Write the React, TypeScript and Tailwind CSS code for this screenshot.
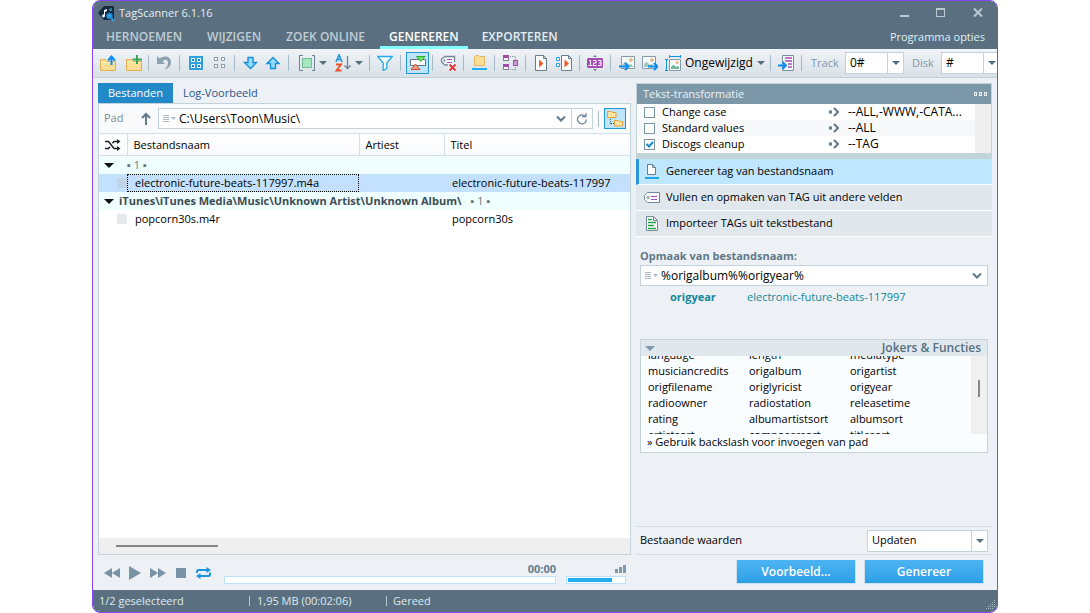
import type { ReactNode } from 'react';

const menuItems = ['HERNOEMEN', 'WIJZIGEN', 'ZOEK ONLINE', 'GENEREREN', 'EXPORTEREN'];

const transforms = [
  { name: 'Change case', scope: '--ALL,-WWW,-CATA...', checked: false },
  { name: 'Standard values', scope: '--ALL', checked: false },
  { name: 'Discogs cleanup', scope: '--TAG', checked: true },
];

const jokers = [
  'language', 'length', 'mediatype',
  'musiciancredits', 'origalbum', 'origartist',
  'origfilename', 'origlyricist', 'origyear',
  'radioowner', 'radiostation', 'releasetime',
  'rating', 'albumartistsort', 'albumsort',
  'artistsort', 'composersort', 'titlesort',
];

function Icon({ children, crisp = true }: { children: ReactNode; crisp?: boolean }) {
  return (
    <svg width="16" height="16" viewBox="0 0 16 16" fill="none" className="shrink-0" shapeRendering={crisp ? 'crispEdges' : 'auto'} aria-hidden="true">
      {children}
    </svg>
  );
}

function Caret({ className = 'text-[#566f7f]' }: { className?: string }) {
  return (
    <svg width="8" height="4" viewBox="0 0 8 4" className={`shrink-0 ${className}`} aria-hidden="true">
      <path d="M0 0h8L4 4z" fill="currentColor" />
    </svg>
  );
}

function Chevron() {
  return (
    <svg width="10" height="8" viewBox="0 0 10 8" fill="none" className="shrink-0" aria-hidden="true">
      <path d="M1 1.500l4 4 4-4" stroke="#5f7787" strokeWidth="2" />
    </svg>
  );
}

function ListCaret() {
  return (
    <svg width="13" height="8" viewBox="0 0 13 8" fill="none" className="shrink-0" aria-hidden="true">
      <path d="M0 .5h6M0 2.500h6M0 4.500h6M0 6.500h6" stroke="#a9bac6" shapeRendering="crispEdges" />
      <path d="M8 2h5l-2.500 3z" fill="#a9bac6" />
    </svg>
  );
}

function ToolButton({ label, children }: { label: string; children: ReactNode }) {
  return (
    <button type="button" aria-label={label} className="flex shrink-0 items-center">
      {children}
    </button>
  );
}

function Separator() {
  return <span className="h-4 w-px shrink-0 bg-[#a6b9c7]" />;
}

function Picture() {
  return (
    <>
      <path d="M2.500 1.500h13v12h-13z" fill="#f5f9fb" stroke="#8799a6" />
      <path d="M11 3h2v1h1v2h-1v1h-2V6h-1V4h1z" fill="#e3c08c" />
      <path d="M4 12V9l2-2h1l3 3 1-1h1l2 2v1z" fill="#a2c9b8" />
    </>
  );
}

function SmallFolder() {
  return (
    <>
      <path d="M.5 4.500h5l1.500 2h8.500v9H.5z" fill="#fbdf96" stroke="#e5ae4e" />
      <path d="M1 7.500h14" stroke="#fff0c6" />
    </>
  );
}

function Toolbar() {
  return (
    <div className="flex h-[29px] shrink-0 items-center overflow-hidden border-b border-[#c2d1d7] bg-linear-to-b from-[#f0f3f7] to-[#d8e1e7]">
      <div className="flex items-center gap-[10px] pl-[7px] pr-[6px]">
        <ToolButton label="Map openen">
          <Icon crisp={false}>
            <SmallFolder />
            <path d="M11.500 10V2M8 5.500l3.500-4 3.500 4" stroke="#0b8cf0" strokeWidth="2" />
          </Icon>
        </ToolButton>
        <ToolButton label="Map toevoegen">
          <Icon crisp={false}>
            <SmallFolder />
            <path d="M11 0v9M6.500 4.500H16" stroke="#36a853" strokeWidth="2" />
          </Icon>
        </ToolButton>
      </div>
      <Separator />
      <div className="px-[7px]">
        <ToolButton label="Ongedaan maken">
          <Icon crisp={false}>
            <path d="M1 1v8h8L6.500 6.500C9 3.500 12.500 4.500 12 8.500c-.3 2.400-1.500 4-3.500 6C13 13 15 10.500 15 7.500 15 1 8 0 3.500 3.500z" fill="#8ba1b0" />
          </Icon>
        </ToolButton>
      </div>
      <Separator />
      <div className="flex gap-2 px-[7px]">
        <ToolButton label="Alles selecteren">
          <Icon>
            <path d="M2 1h14v14H2z" fill="#2d9fdc" />
            <path d="M4.500 3.500h3v3h-3zM10.500 3.500h3v3h-3zM4.500 9.500h3v3h-3zM10.500 9.500h3v3h-3z" fill="#1c86c0" stroke="#e6f6ff" />
          </Icon>
        </ToolButton>
        <ToolButton label="Selectie opheffen">
          <Icon>
            <path d="M3.500 2.500h3v3h-3zM10.500 2.500h3v3h-3zM3.500 9.500h3v3h-3zM10.500 9.500h3v3h-3z" fill="#fff" stroke="#8c9fad" />
          </Icon>
        </ToolButton>
      </div>
      <Separator />
      <div className="flex gap-[7px] px-[7px]">
        <ToolButton label="Omlaag">
          <Icon crisp={false}>
            <path d="M6 2.500h5v5h3.500L8.500 13.500 2.500 7.500H6z" fill="#8fdcff" stroke="#1b8fd6" strokeWidth="1.400" />
          </Icon>
        </ToolButton>
        <ToolButton label="Omhoog">
          <Icon crisp={false}>
            <path d="M5.500 13.500h5v-5H14L8 2.500 2 8.500h3.500z" fill="#8fdcff" stroke="#1b8fd6" strokeWidth="1.400" />
          </Icon>
        </ToolButton>
      </div>
      <Separator />
      <div className="flex items-center gap-1 pl-[10px] pr-[6px]">
        <ToolButton label="Weergave">
          <Icon>
            <path d="M3.500.5h-3v15h3M12.500.5h3v15h-3" stroke="#6e8493" />
            <path d="M3.500 3.500h9v9h-9z" fill="#a5eabf" stroke="#74ba95" />
          </Icon>
        </ToolButton>
        <Caret />
        <ToolButton label="Sorteren">
          <svg width="20" height="18" viewBox="4 0 20 18" fill="none" className="shrink-0" aria-hidden="true">
            <path d="M9 8l3-7 3 7M10 5.500h4" stroke="#2299dc" strokeWidth="1.700" />
            <path d="M9 10.500h5l-4.500 6h5" stroke="#ee522d" strokeWidth="1.900" />
            <path d="M20.500 2v12M17.500 11.500l3 3 3-3" stroke="#6e8493" strokeWidth="1.300" />
          </svg>
        </ToolButton>
        <Caret />
      </div>
      <Separator />
      <div className="px-[7px]">
        <ToolButton label="Filter">
          <Icon crisp={false}>
            <path d="M.7 1.500h14.600L9.800 8v5.500l-3.600 2V8z" fill="#f4fcff" stroke="#27a9e8" strokeWidth="1.300" />
          </Icon>
        </ToolButton>
      </div>
      <Separator />
      <div className="pl-[5px] pr-[3px]">
        <button type="button" aria-label="Tag-paneel" aria-pressed="true" className="flex h-[22px] w-[23px] items-center justify-center border border-[#2495d8] bg-[#bce5fd]">
          <Icon crisp={false}>
            <path d="M.5 4.500h15v6H.5z" fill="#fff" stroke="#5e7687" />
            <path d="M6.500 1.500h8.500l-4.200 5z" fill="#6be85d" stroke="#32a83a" />
            <path d="M1 14.500h9L5.500 9z" fill="#f7a07f" stroke="#d04d3c" />
          </Icon>
        </button>
      </div>
      <Separator />
      <div className="px-[7px]">
        <ToolButton label="Tag verwijderen">
          <Icon crisp={false}>
            <path d="M14.500 7V1.500H5L1.500 4v3L5 10h3" fill="#f7fafc" stroke="#71889a" strokeWidth="1.300" />
            <path d="M3.500 5.500h2" stroke="#71889a" strokeWidth="2" />
            <path d="M7 4.500h5M7 7.500h5" stroke="#a84bb5" />
            <path d="M9 9l6.500 6.500M15.500 9L9 15.500" stroke="#fff" strokeWidth="4" />
            <path d="M9.500 9.500l6 6m0-6l-6 6" stroke="#e63333" strokeWidth="2" />
          </Icon>
        </ToolButton>
      </div>
      <Separator />
      <div className="px-[7px]">
        <ToolButton label="Bestandsmap">
          <Icon crisp={false}>
            <path d="M3.500 1.500l1-1h3l1 1h5v9h-10z" fill="#fbdf96" stroke="#e5b664" />
            <path d="M1 14h15" stroke="#24aef0" strokeWidth="2" />
          </Icon>
        </ToolButton>
      </div>
      <Separator />
      <div className="px-[7px]">
        <ToolButton label="Structuur">
          <Icon>
            <path d="M1.500.5h5v5h-5zM1.500 9.500h5v5h-5z" fill="#fff" stroke="#8a7a9c" />
            <path d="M1 0h6v3H1zM1 9h6v3H1z" fill="#a24bad" />
            <path d="M11.500 5.500h4v5h-4z" fill="#c99bd1" stroke="#a24bad" />
            <path d="M8 1.500h6M8 14.500h6M13.500 2v3M13.500 12v3" stroke="#8296a3" strokeDasharray="1 1" />
          </Icon>
        </ToolButton>
      </div>
      <Separator />
      <div className="flex gap-[7px] px-[7px]">
        <ToolButton label="Afspelen">
          <Icon crisp={false}>
            <path d="M2.500.5h8l3 3v12h-11z" fill="#fff" stroke="#687e8d" />
            <path d="M10.500.5v3h3" stroke="#687e8d" />
            <path d="M6 4.500l4.500 4L6 12.500z" fill="#f05a24" />
          </Icon>
        </ToolButton>
        <ToolButton label="Lijst afspelen">
          <Icon crisp={false}>
            <path d="M5.500.5h7l3 3v12h-10z" fill="#fff" stroke="#687e8d" />
            <path d="M12.500.5v3h3" stroke="#687e8d" />
            <path d="M8.500 4.500l4.500 4-4.500 4z" fill="#f05a24" />
            <path d="M.5 2.500h3v3h-3zM.5 8.500h3v3h-3z" fill="#fff" stroke="#24a7e8" />
          </Icon>
        </ToolButton>
      </div>
      <Separator />
      <div className="px-[7px]">
        <ToolButton label="Nummeren">
          <Icon crisp={false}>
            <path d="M1 3h14l1 1v8l-1 1H1l-1-1V4z" fill="#a64bb5" />
            <path d="M6 2l2-2 2 2zM6 14l2 2 2-2z" fill="#687e8d" />
            <path d="M2 5.500h1.500v5M1.500 10.500h4M6 5.500h3v2.500H6.500v2.500H9.500M11 5.500h3v5h-3m1-2.500h2" stroke="#fff" />
          </Icon>
        </ToolButton>
      </div>
      <Separator />
      <div className="flex items-center gap-[7px] pl-2 pr-[5px]">
        <ToolButton label="Hoes importeren">
          <Icon crisp={false}>
            <Picture />
            <path d="M0 11.500h9M6 8l3.500 3.500L6 15" stroke="#0b8cf0" strokeWidth="2" />
          </Icon>
        </ToolButton>
        <ToolButton label="Hoes exporteren">
          <Icon crisp={false}>
            <g transform="translate(-2)">
              <Picture />
            </g>
            <path d="M6 11.500h9M12 8l3.500 3.500L12 15" stroke="#0b8cf0" strokeWidth="2" />
          </Icon>
        </ToolButton>
        <button type="button" className="flex items-center gap-1 text-[12px] text-black">
          <Icon crisp={false}>
            <path d="M4.500 4.500h11v11h-11z" fill="#f5f9fb" stroke="#8799a6" />
            <path d="M11 6h2v1h1v1h-1v1h-2z" fill="#e3c08c" />
            <path d="M6 14v-2l2-2h1l2 2 2-1 1 1v2z" fill="#6fb592" />
            <path d="M5 1.500h10M4.500 0v3M15.500 0v3M1.500 5v10M0 4.500h3M0 15.500h3" stroke="#1493e6" />
          </Icon>
          <span className="w-[68px] text-left">Ongewijzigd</span>
          <Caret />
        </button>
      </div>
      <Separator />
      <div className="px-[7px]">
        <ToolButton label="Rapport">
          <Icon crisp={false}>
            <path d="M4.500.5h11v15h-11z" fill="#f9fbfc" stroke="#798e9c" />
            <path d="M7 3h7M7 6h7M10 9h4M10 12h4" stroke="#a64bb5" strokeWidth="1.300" />
            <path d="M0 10.500h7M4.500 7l3.500 3.500L4.500 14" stroke="#0b8cf0" strokeWidth="2" />
          </Icon>
        </ToolButton>
      </div>
      <Separator />
      <label htmlFor="track" className="w-[43px] shrink-0 pl-[9px] text-[11px] text-[#7f97a7]">Track</label>
      <NumberCombo id="track" value="0#" />
      <label htmlFor="disk" className="w-[37px] shrink-0 pl-2 text-[11px] text-[#7f97a7]">Disk</label>
      <NumberCombo id="disk" value="#" />
    </div>
  );
}

function NumberCombo({ id, value }: { id: string; value: string }) {
  return (
    <div className="flex h-[22px] w-[59px] shrink-0 border border-[#c2d3dc] bg-white">
      <input id={id} defaultValue={value} className="w-[41px] px-1 text-[12px] text-black outline-none" />
      <button type="button" aria-label={`Lijst ${id}`} className="flex flex-1 items-center justify-center border-l border-[#c2d3dc]">
        <Caret />
      </button>
    </div>
  );
}

function TitleBar() {
  return (
    <header className="flex h-[48px] shrink-0 flex-col bg-[#5a7080] text-[#e4edf2]">
      <div className="flex h-6 items-center pl-[5px] pr-[14px]">
        <svg width="17" height="17" viewBox="0 0 17 17" className="mr-1" aria-hidden="true">
          <path d="M0 8L6 1h9l1 1v13H6z" fill="#16293d" />
          <path d="M6 11V5l3-1v2L7 7v4a1.500 1.500 0 1 1-1-1.500" fill="#eaf5fc" />
          <circle cx="11.500" cy="11" r="3" fill="#2b9be0" stroke="#196fb0" />
          <path d="M13.500 13.500l2.500 2.500" stroke="#36a6eb" strokeWidth="2" />
          <path d="M11 4l2 2M13 3v3" stroke="#50b5f0" />
        </svg>
        <h1 className="text-[11px]">TagScanner 6.1.16</h1>
        <div className="ml-auto flex items-center gap-[27px]">
          <button type="button" aria-label="Minimaliseren">
            <svg width="10" height="10" viewBox="0 0 10 10" shapeRendering="crispEdges"><path d="M1 7h9v2H1z" fill="#b9cad5" /></svg>
          </button>
          <button type="button" aria-label="Maximaliseren">
            <svg width="10" height="10" viewBox="0 0 10 10" fill="none" shapeRendering="crispEdges"><path d="M.5.5h8v8h-8z" stroke="#b9cad5" /><path d="M0 1.500h9" stroke="#b9cad5" /></svg>
          </button>
          <button type="button" aria-label="Sluiten">
            <svg width="10" height="10" viewBox="0 0 10 10" fill="none"><path d="M1 .5l8 8M9 .5l-8 8" stroke="#b9cad5" strokeWidth="2" /></svg>
          </button>
        </div>
      </div>
      <nav className="flex flex-1 items-stretch pl-[3px] pr-[12px] text-[12px] font-semibold text-[#c1cdd4]">
        {menuItems.map((item) => (
          <a
            key={item}
            href="#"
            className={
              item === 'GENEREREN'
                ? 'flex items-center border-b-3 border-[#84ffff] px-[9px] pt-[3px] text-white'
                : item === 'EXPORTEREN'
                  ? 'flex items-center px-[14px] text-[#e4eef3]'
                  : 'mr-[5px] flex items-center px-[10px]'
            }
          >
            {item}
          </a>
        ))}
        <a href="#" className="ml-auto flex items-center text-[11px] font-normal text-[#dff1f5]">Programma opties</a>
      </nav>
    </header>
  );
}

function FileTable() {
  return (
    <table className="w-full table-fixed text-left text-[11px] leading-[18px] text-black">
      <colgroup>
        <col className="w-[28px]" />
        <col className="w-[232px]" />
        <col className="w-[85px]" />
        <col />
      </colgroup>
      <thead>
        <tr className="h-[22px] border-y border-[#d3e0e7] bg-linear-to-b from-white to-[#f9fafb]">
          <th aria-label="Volgorde" className="border-r border-[#d3e0e7] pl-[6px]">
            <svg width="17" height="12" viewBox="0 0 17 12" fill="none" aria-hidden="true">
              <path d="M0 2.500h3.500L9 9.500h5M0 9.500h3.500L5 7.700M7.500 4.300L9 2.500h5" stroke="#1d2327" strokeWidth="1.500" />
              <path d="M12 0l3.500 2.500L12 5zM12 7l3.500 2.500L12 12z" fill="#1d2327" />
            </svg>
          </th>
          <th className="border-r border-[#d3e0e7] pl-[6px] font-normal">Bestandsnaam</th>
          <th className="border-r border-[#d3e0e7] pl-[6px] font-normal">Artiest</th>
          <th className="pl-[6px] font-normal">Titel</th>
        </tr>
      </thead>
      <tbody>
        <tr className="h-[18px] bg-[#efffff]">
          <td className="pl-[5px]"><GroupArrow /></td>
          <td colSpan={3} className="text-[#657681]">▪ 1 ▪</td>
        </tr>
        <tr className="h-[18px] bg-[#c3e0fe]">
          <td className="pl-[18px]"><span className="block size-[10px] bg-[#bfd5e7]" /></td>
          <td className="pl-2 outline-1 -outline-offset-1 outline-dotted outline-black">electronic-future-beats-117997.m4a</td>
          <td />
          <td className="pl-2">electronic-future-beats-117997</td>
        </tr>
        <tr className="h-[18px] bg-[#efffff]">
          <td colSpan={4} className="pl-[5px]">
            <div className="flex items-center gap-[5px] whitespace-nowrap">
              <GroupArrow />
              <span className="font-bold text-[#3c4b54]">iTunes\iTunes Media\Music\Unknown Artist\Unknown Album\</span>
              <span className="pl-1 text-[#657681]">▪ 1 ▪</span>
            </div>
          </td>
        </tr>
        <tr className="h-[18px]">
          <td className="pl-[18px]"><span className="block size-[10px] bg-[#e5e9ec]" /></td>
          <td className="pl-2">popcorn30s.m4r</td>
          <td />
          <td className="pl-2">popcorn30s</td>
        </tr>
      </tbody>
    </table>
  );
}

function GroupArrow() {
  return (
    <svg width="10" height="5" viewBox="0 0 10 5" className="shrink-0" aria-hidden="true"><path d="M0 0h10L5 5z" fill="#0d1115" /></svg>
  );
}

function FilesPane() {
  return (
    <section className="flex min-w-0 flex-1 flex-col">
      <div role="tablist" className="flex h-5 shrink-0 text-[11px]">
        <button type="button" role="tab" aria-selected="true" className="w-[75px] bg-[#2289c8] text-white">Bestanden</button>
        <button type="button" role="tab" aria-selected="false" className="px-[10px] text-[#2a5488]">Log-Voorbeeld</button>
      </div>
      <div className="flex min-h-0 flex-1 flex-col border border-[#c2d3da] bg-white">
        <div className="flex h-[29px] shrink-0 items-center bg-[#f8fafc] pl-[5px] pr-1">
          <label htmlFor="path" className="w-[37px] text-[11px] text-[#7c8c98]">Pad</label>
          <button type="button" aria-label="Map omhoog" className="mr-[7px]">
            <svg width="10" height="14" viewBox="0 0 10 14" fill="none"><path d="M5 13V2M1 6l4-4 4 4" stroke="#5f7787" strokeWidth="2" /></svg>
          </button>
          <div className="flex h-[21px] min-w-0 flex-1 items-center border border-[#c2d3dc] bg-white pl-1">
            <ListCaret />
            <input id="path" defaultValue="C:\Users\Toon\Music\" className="min-w-0 flex-1 pl-[3px] text-[12px] text-black outline-none" />
            <button type="button" aria-label="Recente mappen" className="px-[5px]"><Chevron /></button>
            <button type="button" aria-label="Vernieuwen" className="flex h-full w-[21px] items-center justify-center border-l border-[#c2d3dc]">
              <svg width="12" height="12" viewBox="0 0 12 12" fill="none"><path d="M9.500 3.500A4.500 4.500 0 1 0 10.500 6.500" stroke="#71889a" strokeWidth="1.300" /><path d="M6 3.500h4V0" stroke="#71889a" strokeWidth="1.300" /></svg>
            </button>
          </div>
          <span className="mx-[5px] h-4 w-px bg-[#a6b9c7]" />
          <button type="button" aria-label="Mappenstructuur" aria-pressed="true" className="flex h-[21px] w-[22px] items-center justify-center border border-[#2495d8] bg-[#bce5fd]">
            <svg width="18" height="17" viewBox="0 0 18 17" fill="none">
              <path d="M1.500 1.500h4l1 1h3.500v5h-8.500zM8.500 10.500h4l1 1h3v4.500h-8z" fill="#fbe3a3" stroke="#e3a43e" />
              <path d="M4.500 9v5M5 13.500h3" stroke="#3b5262" strokeDasharray="1 1" shapeRendering="crispEdges" />
            </svg>
          </button>
        </div>
        <FileTable />
        <div className="mt-auto flex h-4 items-center bg-[#efefef] pl-[17px]">
          <span className="h-[2px] w-[102px] bg-[#868686]" />
        </div>
      </div>
      <div className="flex h-[35px] shrink-0 items-end pb-[6px] pl-[6px] pr-[5px]">
        <div className="mb-1 flex items-center gap-2">
          <button type="button" aria-label="Vorige"><svg width="16" height="14" viewBox="0 0 16 14"><path d="M8 2v10L0 7zM16 2v10L8 7z" fill="#7893a5" /></svg></button>
          <button type="button" aria-label="Afspelen"><svg width="14" height="14" viewBox="0 0 14 14"><path d="M1 0v14l12-7z" fill="#7893a5" /></svg></button>
          <button type="button" aria-label="Volgende"><svg width="16" height="14" viewBox="0 0 16 14"><path d="M0 2v10l8-5zM8 2v10l8-5z" fill="#7893a5" /></svg></button>
          <button type="button" aria-label="Stop" className="ml-[2px]"><svg width="10" height="14" viewBox="0 0 10 14"><path d="M0 2h10v10H0z" fill="#7893a5" /></svg></button>
          <button type="button" aria-label="Herhalen" className="ml-px">
            <svg width="18" height="14" viewBox="0 0 18 14" fill="none"><path d="M2 7V5.500Q2 4 3.500 4H13M15 6.500V8.500Q15 10 13.500 10H5" stroke="#1f95d8" strokeWidth="2" /><path d="M11.500 1l4.500 3-4.500 3zM5.500 7L1 10l4.500 3z" fill="#1f95d8" /></svg>
          </button>
        </div>
        <div className="ml-[11px] flex flex-1 flex-col items-end">
          <span className="text-[11px] leading-[15px] font-bold text-[#657d8c]">00:00</span>
          <div className="h-2 w-full border border-[#bce3fb] bg-white" />
        </div>
        <div className="ml-[10px] flex w-[60px] flex-col items-end gap-[3px]">
          <svg width="12" height="9" viewBox="0 0 12 9" aria-hidden="true"><path d="M1 5h3v4H1zM5 3h3v6H5zM9 1h3v8H9z" fill="#8098a8" /></svg>
          <div className="h-2 w-full border border-[#bce3fb] bg-white p-px">
            <div className="h-full w-[44px] bg-[#22aeee]" />
          </div>
        </div>
      </div>
    </section>
  );
}

function TransformRow({ name, scope, checked }: { name: string; scope: string; checked: boolean }) {
  return (
    <label className="flex h-4 items-center pl-[7px] text-[11px] odd:bg-white even:bg-[#f7f8fa]">
      <input type="checkbox" defaultChecked={checked} className="peer size-[11px] appearance-none border border-[#7c95a5] bg-white" />
      <svg width="11" height="11" viewBox="0 0 11 11" fill="none" className="-ml-[11px] hidden peer-checked:block" aria-hidden="true">
        <path d="M2.500 5l2.500 2.500L9 3" stroke="#1c86c6" strokeWidth="2" />
      </svg>
      <span className="w-[174px] pl-[7px]">{name}</span>
      <svg width="11" height="10" viewBox="0 0 11 10" fill="none" className="mr-[8px]" aria-hidden="true">
        <path d="M0 3.500h3v3H0z" fill="#5f7787" />
        <path d="M5 1l4 4-4 4" stroke="#5f7787" strokeWidth="2" />
      </svg>
      <span className="text-[12px] leading-4">{scope}</span>
    </label>
  );
}

function GeneratePane() {
  return (
    <aside className="flex w-[356px] shrink-0 flex-col text-[11px] text-black">
      <div className="border border-b-[6px] border-[#c2d3da]">
        <div className="flex h-5 items-center justify-between bg-[#7c97a8] pl-[6px] pr-1 text-[#edf3f6]">
          <h2>Tekst-transformatie</h2>
          <button type="button" aria-label="Meer">
            <svg width="13" height="4" viewBox="0 0 13 4" fill="none" shapeRendering="crispEdges"><path d="M.5.5h2v3h-2zM5.500.5h2v3h-2zM10.500.5h2v3h-2z" stroke="#eef4f7" /></svg>
          </button>
        </div>
        <div className="flex h-[49px] bg-white">
          <div className="flex-1">
            {transforms.map((t) => <TransformRow key={t.name} {...t} />)}
          </div>
          <div className="w-4 bg-[#efefef]" />
        </div>
      </div>

      <nav>
        <a href="#" className="flex h-[26px] items-center gap-[6px] border-b border-l-3 border-b-white border-l-[#2798dc] bg-[#bee6fe] pl-[5px]">
          <Icon crisp={false}>
            <path d="M3.500.5h5l3 3v7h-8z" fill="#fff" stroke="#687e8d" />
            <path d="M8.500.5v3h3" stroke="#687e8d" />
            <path d="M1 14h14" stroke="#1ba6ea" strokeWidth="2" />
          </Icon>
          Genereer tag van bestandsnaam
        </a>
        <a href="#" className="flex h-[26px] items-center gap-[6px] border-b border-white bg-[#e0e8ee] pl-2">
          <Icon crisp={false}>
            <path d="M3.500 2.500h12v10h-12L.5 9.500v-4z" fill="#fafcfd" stroke="#71889a" />
            <circle cx="4" cy="7.500" r="1.200" stroke="#71889a" />
            <path d="M7 6.500h6M7 9.500h6" stroke="#a64bb5" />
          </Icon>
          Vullen en opmaken van TAG uit andere velden
        </a>
        <a href="#" className="flex h-[26px] items-center gap-[6px] border-b border-white bg-[#e0e8ee] pl-2">
          <Icon crisp={false}>
            <path d="M2.500.5h7l4 4v10h-11z" fill="#fff" stroke="#71889a" />
            <path d="M9.500.5v4h4" stroke="#71889a" />
            <path d="M4 3.500h4M4 6.500h8M4 9.500h6M4 12.500h8" stroke="#20a347" strokeWidth="1.300" />
          </Icon>
          Importeer TAGs uit tekstbestand
        </a>
      </nav>

      <div className="px-1 pt-[10px]">
        <label htmlFor="format" className="block leading-[18px] font-bold text-[#5f7787]">Opmaak van bestandsnaam:</label>
        <div className="flex h-[21px] items-center border border-[#c2d3dc] bg-white pl-1 pr-[5px]">
          <ListCaret />
          <input id="format" defaultValue="%origalbum%%origyear%" className="min-w-0 flex-1 pl-[3px] text-[12px] outline-none" />
          <button type="button" aria-label="Recente opmaak"><Chevron /></button>
        </div>
        <dl className="flex h-[53px] pt-1 pl-[30px] leading-[14px] text-[#12869a]">
          <dt className="w-[77px] font-bold">origyear</dt>
          <dd>electronic-future-beats-117997</dd>
        </dl>

        <div className="border border-[#c2d3da] bg-[#fafdff]">
          <div className="flex h-4 items-center justify-between bg-[#e0e8ee] pl-1 pr-[6px] text-[12px] font-semibold text-[#566f7f]">
            <svg width="10" height="5" viewBox="0 0 10 5" aria-hidden="true"><path d="M0 0h10L5 5z" fill="#7c97a8" /></svg>
            <h3>Jokers &amp; Functies</h3>
          </div>
          <div className="flex h-[78px] overflow-hidden">
            <ul className="-mt-[9px] grid flex-1 auto-rows-[16px] grid-cols-[101px_101px_1fr] pl-[7px] leading-4">
              {jokers.map((joker) => <li key={joker}>{joker}</li>)}
            </ul>
            <div className="w-4 bg-[#f0f0f0] pt-6 pl-[7px]"><div className="h-[17px] w-[2px] bg-[#868686]" /></div>
          </div>
          <p className="h-[18px] pl-[6px] leading-4">» Gebruik backslash voor invoegen van pad</p>
        </div>
      </div>

      <div className="mt-auto flex h-[29px] items-center justify-between border-y border-[#cfdfe4] px-1">
        <label htmlFor="existing">Bestaande waarden</label>
        <div className="relative">
          <select id="existing" className="block h-[22px] w-[121px] appearance-none border border-[#c2d3dc] bg-white pl-1 outline-none">
            <option>Updaten</option>
          </select>
          <span className="pointer-events-none absolute inset-y-px right-px flex w-4 items-center justify-center border-l border-[#c2d3dc]">
            <Caret />
          </span>
        </div>
      </div>
      <div className="flex h-[35px] items-start justify-end gap-2 pt-[5px] pr-2 text-[12px] font-semibold text-white [text-shadow:0_0_2px_#1e6fa0]">
        <button type="button" className="h-6 w-[120px] border border-t-0 border-[#cfe0ec] bg-linear-to-b from-[#4db4f3] to-[#2c9fe5]">Voorbeeld...</button>
        <button type="button" className="h-6 w-[120px] border border-t-0 border-[#cfe0ec] bg-linear-to-b from-[#4db4f3] to-[#2c9fe5]">Genereer</button>
      </div>
    </aside>
  );
}

export default function App() {
  return (
    <div className="h-screen bg-white px-[92px] font-['Open_Sans','Noto_Sans',sans-serif]">
      <main className="flex h-full flex-col overflow-hidden rounded-lg border border-[#8348ef] bg-[#edf1f6]">
        <TitleBar />
        <Toolbar />
        <div className="flex min-h-0 flex-1 gap-[5px] px-[5px] pt-[5px]">
          <FilesPane />
          <GeneratePane />
        </div>
        <footer className="flex h-[22px] shrink-0 items-center bg-[#5a7080] pl-[6px] text-[11px] text-[#dfeaf0]">
          <span className="w-[150px]">1/2 geselecteerd</span>
          <span className="mr-[7px] h-[10px] w-px bg-[#b9c8d1]" />
          <span className="w-[129px]">1,95 MB (00:02:06)</span>
          <span className="mr-[6px] h-[10px] w-px bg-[#b9c8d1]" />
          <span>Gereed</span>
          <svg width="12" height="12" viewBox="0 0 12 12" className="mt-auto ml-auto" shapeRendering="crispEdges" aria-hidden="true">
            <path d="M9 0h1v1H9zM7 2h1v1H7zM9 2h1v1H9zM5 4h1v1H5zM7 4h1v1H7zM9 4h1v1H9zM3 6h1v1H3zM5 6h1v1H5zM7 6h1v1H7zM9 6h1v1H9zM1 8h1v1H1zM3 8h1v1H3zM5 8h1v1H5zM7 8h1v1H7z" fill="#a9bac4" />
          </svg>
        </footer>
      </main>
    </div>
  );
}
